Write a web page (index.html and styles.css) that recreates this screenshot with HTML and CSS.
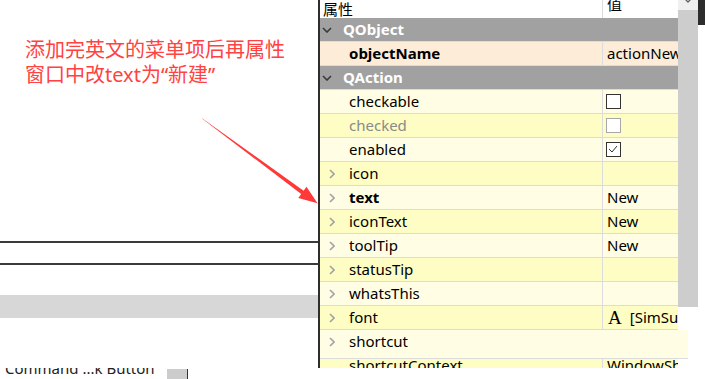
FILE: index.html
```html
<!DOCTYPE html>
<html>
	<head>
		<meta charset="UTF-8">
		<link rel="stylesheet" href="styles.css">
	</head>
	<body>
		<div class="main flex-r">
			<div class="canvas">
				<p class="note">添加完英文的菜单项后再属性<br>窗口中改text为“新建”</p>
				<svg class="arrow" width="120" height="90" viewBox="200 116 120 90">
					<polygon points="202,118.6 301.2,194 298.3,198.1 317.5,203.2 306.5,186.7 303.6,190.8 202.4,118.4" fill="#ff3838"/>
				</svg>
				<div class="frame"></div>
				<div class="band"></div>
			</div>
			<div class="props">
				<div class="head flex-r"><span class="name">属性</span><span class="val">值</span></div>
				<div class="group">
					<svg class="caret" width="10" height="6"><polyline points="1,1 5,5 9,1" fill="none" stroke="#3a3a3a" stroke-width="1.6"/></svg>QObject
				</div>
				<div class="row peach">
					<span class="name"><i class="tw"></i><b>objectName</b></span><span class="val">actionNew</span>
				</div>
				<div class="group">
					<svg class="caret" width="10" height="6"><polyline points="1,1 5,5 9,1" fill="none" stroke="#3a3a3a" stroke-width="1.6"/></svg>QAction
				</div>
				<div class="row light">
					<span class="name"><i class="tw"></i>checkable</span><span class="val"><span class="box"></span></span>
				</div>
				<div class="row dark off">
					<span class="name"><i class="tw"></i>checked</span><span class="val"><span class="box"></span></span>
				</div>
				<div class="row light">
					<span class="name"><i class="tw"></i>enabled</span>
					<span class="val"><span class="box"><svg width="12" height="12"><polyline points="2,6 5,9 10,3" fill="none" stroke="#333" stroke-width="1"/></svg></span></span>
				</div>
				<div class="row dark">
					<span class="name"><i class="tw"><svg width="6" height="10"><polyline points="1,1 5,5 1,9" fill="none" stroke="#a3a3a3" stroke-width="1.6"/></svg></i>icon</span><span class="val"></span>
				</div>
				<div class="row light">
					<span class="name"><i class="tw"><svg width="6" height="10"><polyline points="1,1 5,5 1,9" fill="none" stroke="#a3a3a3" stroke-width="1.6"/></svg></i><b>text</b></span><span class="val">New</span>
				</div>
				<div class="row dark">
					<span class="name"><i class="tw"><svg width="6" height="10"><polyline points="1,1 5,5 1,9" fill="none" stroke="#a3a3a3" stroke-width="1.6"/></svg></i>iconText</span><span class="val">New</span>
				</div>
				<div class="row light">
					<span class="name"><i class="tw"><svg width="6" height="10"><polyline points="1,1 5,5 1,9" fill="none" stroke="#a3a3a3" stroke-width="1.6"/></svg></i>toolTip</span><span class="val">New</span>
				</div>
				<div class="row dark">
					<span class="name"><i class="tw"><svg width="6" height="10"><polyline points="1,1 5,5 1,9" fill="none" stroke="#a3a3a3" stroke-width="1.6"/></svg></i>statusTip</span><span class="val"></span>
				</div>
				<div class="row light">
					<span class="name"><i class="tw"><svg width="6" height="10"><polyline points="1,1 5,5 1,9" fill="none" stroke="#a3a3a3" stroke-width="1.6"/></svg></i>whatsThis</span><span class="val"></span>
				</div>
				<div class="row dark">
					<span class="name"><i class="tw"><svg width="6" height="10"><polyline points="1,1 5,5 1,9" fill="none" stroke="#a3a3a3" stroke-width="1.6"/></svg></i>font</span>
					<span class="val"><span class="glyph">A</span>[SimSun, 9]</span>
				</div>
				<div class="row light cut">
					<span class="name"><i class="tw"><svg width="6" height="10"><polyline points="1,1 5,5 1,9" fill="none" stroke="#a3a3a3" stroke-width="1.6"/></svg></i>shortcut</span><span class="val"></span>
				</div>
				<div class="row dark">
					<span class="name"><i class="tw"></i>shortcutContext</span><span class="val">WindowShortcut</span>
				</div>
			</div>
			<div class="scroll">
				<div class="cap"><svg width="10" height="6"><polyline points="1,-2 5,2 9,-2" fill="none" stroke="#606060" stroke-width="1.3"/></svg></div>
				<div class="thumb"></div>
			</div>
			<div class="edge"><div class="edge-top"></div></div>
		</div>
		<div class="bottom flex-r">
			<span class="label">Command ...k Button</span>
			<span class="swatch"></span>
		</div>
	</body>
</html>
```

FILE: styles.css
```css
* {
	font-family: "Noto Sans", "Noto Sans CJK SC", sans-serif;
}
html, body {
	background: #fff;
	height: 100%;
	margin: 0;
	overflow: hidden;
	padding: 0;
	width: 100%;
}

.flex-r {
	display: flex;
	flex-direction: row;
	flex-wrap: nowrap;
}

.main {
	height: 368px;
	overflow: hidden;
}

/* left drawing area */
.canvas {
	flex: none;
	position: relative;
	width: 318px;
}
.note {
	color: #ff4242;
	font-size: 20px;
	height: 50px;
	line-height: 25px;
	margin: 0;
	padding: 37px 0 0 25px;
}
.arrow {
	left: 200px;
	position: absolute;
	top: 116px;
}
.frame {
	border-bottom: 2px solid #3a3a3a;
	border-top: 2px solid #3a3a3a;
	height: 20px;
	margin-top: 154px;
}
.band {
	background: #d7d7d7;
	height: 23px;
	margin-top: 30px;
}

/* property editor */
.props {
	border-left: 2px solid #2e2e2e;
	color: #000;
	flex: none;
	font-size: 15px;
	width: 358px;
}
.head {
	background: #fff;
	height: 18px;
	line-height: 8px;
	overflow: hidden;
}
.head .name {
	padding-left: 3px;
}
.name {
	align-items: center;
	border-right: 1px solid #dcdcdc;
	box-sizing: border-box;
	display: flex;
	flex: none;
	width: 283px;
}
.val {
	flex: 1;
	overflow: hidden;
	padding-left: 4px;
	white-space: nowrap;
}
.group, .row {
	border-bottom: 1px solid #dcdcdc;
	display: flex;
	height: 23px;
	line-height: 23px;
}
.group {
	align-items: center;
	background: #a1a1a1;
	color: #fff;
	font-weight: bold;
}
.caret {
	margin: 0 11px 0 2px;
}
.tw {
	display: flex;
	flex: none;
	padding-left: 9px;
	width: 20px;
}
b {
	font-weight: bold;
}
.peach { background: #fdecd7; }
.light { background: #fffee4; }
.dark { background: #fefdc3; }
.off { color: #8a8a8a; }
.off .box { border-color: #a8a8a8; }

.box {
	background: #fff;
	border: 1px solid #333;
	display: inline-block;
	height: 13px;
	margin: 4px 0 0 -1px;
	vertical-align: top;
	width: 13px;
}
.box svg {
	display: block;
}
.glyph {
	display: inline-block;
	font-family: "Liberation Serif", serif;
	font-size: 19px;
	margin: 0 8px 0 1px;
	vertical-align: top;
}
.cut {
	align-items: flex-start;
	height: 28px;
	margin: 0 -10px -5px 0;
	position: relative;
	z-index: 1;
}
.cut .name {
	border-right: none;
	height: 23px;
}

/* scrollbar and window edge */
.scroll {
	background: #fff;
	flex: none;
	width: 20px;
}
.cap {
	background: #f0f0f0;
	display: flex;
	height: 10px;
	justify-content: center;
}
.thumb {
	background: #cdcdcd;
	height: 297px;
}
.edge {
	flex: none;
	width: 7px;
}
.edge-top {
	background: #2d2d2d;
	height: 25px;
}

/* strip below */
.bottom {
	height: 11px;
	overflow: hidden;
}
.label {
	color: #222;
	display: block;
	flex: none;
	font-size: 15px;
	line-height: 20px;
	margin-top: -10px;
	padding-left: 5px;
	width: 162px;
}
.swatch {
	background: #cccccc;
	border-right: 1px solid #333;
	flex: none;
	height: 10px;
	margin-top: 1px;
	width: 20px;
}
```
